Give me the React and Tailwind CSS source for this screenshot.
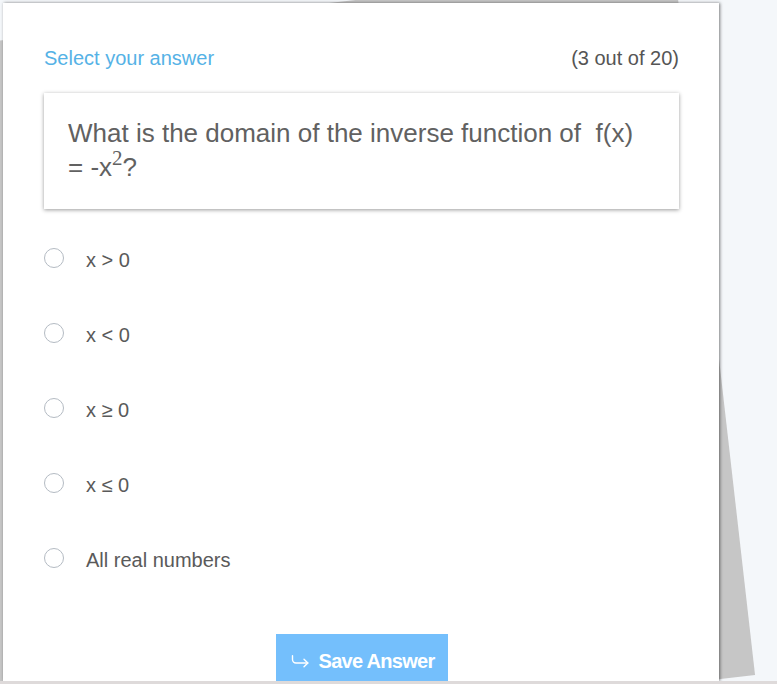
import React from "react";

const options = ["x > 0", "x < 0", "x \u2265 0", "x \u2264 0", "All real numbers"];

function ArrowIcon() {
  return (
    <svg width="18" height="13" viewBox="0 0 18 13" fill="none" stroke="white" strokeWidth="1.4" strokeLinecap="round" strokeLinejoin="round">
      <path d="M1.5 0.7 V4.5 a3.5 3.5 0 0 0 3.5 3.5 H16.8" />
      <path d="M13 4.2 L16.8 8 L13 11.8" />
    </svg>
  );
}

export default function App() {
  return (
    <div className="relative h-[684px] w-[777px] overflow-hidden bg-[#f4f7fa] font-['Liberation_Sans',Arial,sans-serif]">
      <div className="absolute left-[-53px] top-[5px] h-[716px] w-[770px] rotate-[-6.5deg] bg-[#c6c6c6]" />
      <div className="relative ml-[3px] mt-[3px] h-[678px] w-[716px] overflow-hidden bg-white pl-[41px] pr-[40px] pt-[44px] shadow-[1px_0_3px_rgba(0,0,0,0.5)]">
        <div className="mb-[23px] flex items-center justify-between text-[20px] leading-[23px]">
          <span className="text-[#55b2e6]">Select your answer</span>
          <span className="text-[#555555]">(3 out of 20)</span>
        </div>
        <div className="bg-white pb-[25px] pl-6 pr-8 pt-[23px] text-[26px] leading-[34px] text-[#616161] shadow-[0_1px_4px_rgba(0,0,0,0.4)]">
          What is the domain of the inverse function of&nbsp; f(x) = -x
          <sup className="top-[-11px] font-['Liberation_Serif',serif] text-[21px]">2</sup>?
        </div>
        <div className="mt-[11px] flex flex-col">
          {options.map((o) => (
            <label key={o} className="flex h-[75px] items-center gap-[22px]">
              <span className="h-5 w-5 shrink-0 rounded-full border border-[#b4bbc3] bg-white" />
              <span className="mt-[6px] text-[20px] leading-[23px] text-[#5a5a5a]">{o}</span>
            </label>
          ))}
        </div>
        <div className="mt-[39px] flex justify-center">
          <button className="flex h-[54px] w-[172px] items-center gap-[10px] bg-[#74bffc] pl-[15px] text-[20px] font-bold leading-[22px] tracking-[-0.7px] text-white">
            <ArrowIcon />
            <span>Save Answer</span>
          </button>
        </div>
      </div>
      <div className="relative h-[3px] bg-[#dedada]" />
    </div>
  );
}
